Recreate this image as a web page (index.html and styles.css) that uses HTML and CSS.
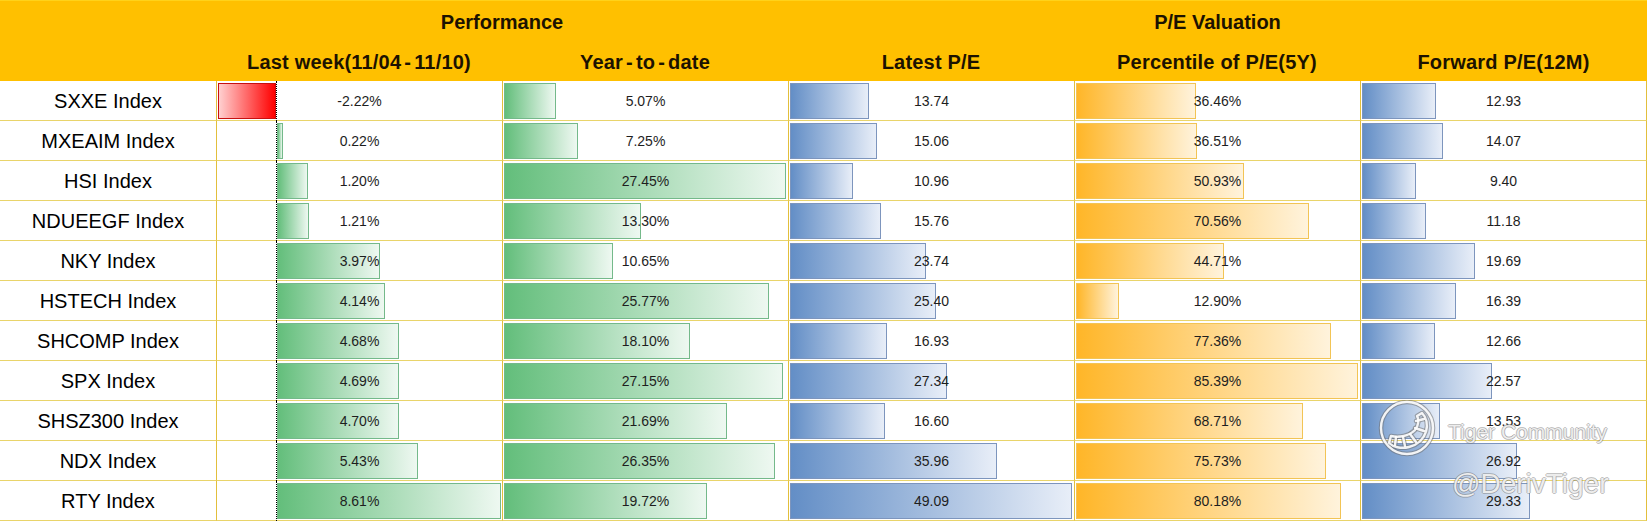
FILE: index.html
```html
<!DOCTYPE html>
<html lang="en">
<head>
<meta charset="utf-8">
<title>Index Performance &amp; P/E Valuation</title>
<link rel="stylesheet" href="styles.css">
</head>
<body>
<div class="sheet">
  <div class="head">
    <div class="h-blank"></div>
    <div class="h-group perf">Performance</div>
    <div class="h-group pe">P/E Valuation</div>
    <div class="h-col">Last week(11/04<span class="hy">-</span>11/10)</div>
    <div class="h-col">Year<span class="hy">-</span>to<span class="hy">-</span>date</div>
    <div class="h-col">Latest P/E</div>
    <div class="h-col">Percentile of P/E(5Y)</div>
    <div class="h-col">Forward P/E(12M)</div>
  </div>

  <div class="row">
    <div class="name">SXXE Index</div>
    <div class="cell lw"><span class="axis"></span><span class="bar neg" style="width:58px"></span><span class="val">-2.22%</span></div>
    <div class="cell"><span class="bar green" style="width:52px"></span><span class="val">5.07%</span></div>
    <div class="cell"><span class="bar blue" style="width:79px"></span><span class="val">13.74</span></div>
    <div class="cell"><span class="bar orange" style="width:120px"></span><span class="val">36.46%</span></div>
    <div class="cell last"><span class="bar blue" style="width:74px"></span><span class="val">12.93</span></div>
  </div>
  <div class="row">
    <div class="name">MXEAIM Index</div>
    <div class="cell lw"><span class="axis"></span><span class="bar green pos" style="width:6px"></span><span class="val">0.22%</span></div>
    <div class="cell"><span class="bar green" style="width:74px"></span><span class="val">7.25%</span></div>
    <div class="cell"><span class="bar blue" style="width:87px"></span><span class="val">15.06</span></div>
    <div class="cell"><span class="bar orange" style="width:121px"></span><span class="val">36.51%</span></div>
    <div class="cell last"><span class="bar blue" style="width:81px"></span><span class="val">14.07</span></div>
  </div>
  <div class="row">
    <div class="name">HSI Index</div>
    <div class="cell lw"><span class="axis"></span><span class="bar green pos" style="width:31px"></span><span class="val">1.20%</span></div>
    <div class="cell"><span class="bar green" style="width:282px"></span><span class="val">27.45%</span></div>
    <div class="cell"><span class="bar blue" style="width:63px"></span><span class="val">10.96</span></div>
    <div class="cell"><span class="bar orange" style="width:168px"></span><span class="val">50.93%</span></div>
    <div class="cell last"><span class="bar blue" style="width:54px"></span><span class="val">9.40</span></div>
  </div>
  <div class="row">
    <div class="name">NDUEEGF Index</div>
    <div class="cell lw"><span class="axis"></span><span class="bar green pos" style="width:32px"></span><span class="val">1.21%</span></div>
    <div class="cell"><span class="bar green" style="width:137px"></span><span class="val">13.30%</span></div>
    <div class="cell"><span class="bar blue" style="width:91px"></span><span class="val">15.76</span></div>
    <div class="cell"><span class="bar orange" style="width:233px"></span><span class="val">70.56%</span></div>
    <div class="cell last"><span class="bar blue" style="width:64px"></span><span class="val">11.18</span></div>
  </div>
  <div class="row">
    <div class="name">NKY Index</div>
    <div class="cell lw"><span class="axis"></span><span class="bar green pos" style="width:103px"></span><span class="val">3.97%</span></div>
    <div class="cell"><span class="bar green" style="width:109px"></span><span class="val">10.65%</span></div>
    <div class="cell"><span class="bar blue" style="width:136px"></span><span class="val">23.74</span></div>
    <div class="cell"><span class="bar orange" style="width:148px"></span><span class="val">44.71%</span></div>
    <div class="cell last"><span class="bar blue" style="width:113px"></span><span class="val">19.69</span></div>
  </div>
  <div class="row">
    <div class="name">HSTECH Index</div>
    <div class="cell lw"><span class="axis"></span><span class="bar green pos" style="width:108px"></span><span class="val">4.14%</span></div>
    <div class="cell"><span class="bar green" style="width:265px"></span><span class="val">25.77%</span></div>
    <div class="cell"><span class="bar blue" style="width:146px"></span><span class="val">25.40</span></div>
    <div class="cell"><span class="bar orange" style="width:43px"></span><span class="val">12.90%</span></div>
    <div class="cell last"><span class="bar blue" style="width:94px"></span><span class="val">16.39</span></div>
  </div>
  <div class="row">
    <div class="name">SHCOMP Index</div>
    <div class="cell lw"><span class="axis"></span><span class="bar green pos" style="width:122px"></span><span class="val">4.68%</span></div>
    <div class="cell"><span class="bar green" style="width:186px"></span><span class="val">18.10%</span></div>
    <div class="cell"><span class="bar blue" style="width:97px"></span><span class="val">16.93</span></div>
    <div class="cell"><span class="bar orange" style="width:255px"></span><span class="val">77.36%</span></div>
    <div class="cell last"><span class="bar blue" style="width:73px"></span><span class="val">12.66</span></div>
  </div>
  <div class="row">
    <div class="name">SPX Index</div>
    <div class="cell lw"><span class="axis"></span><span class="bar green pos" style="width:122px"></span><span class="val">4.69%</span></div>
    <div class="cell"><span class="bar green" style="width:279px"></span><span class="val">27.15%</span></div>
    <div class="cell"><span class="bar blue" style="width:157px"></span><span class="val">27.34</span></div>
    <div class="cell"><span class="bar orange" style="width:282px"></span><span class="val">85.39%</span></div>
    <div class="cell last"><span class="bar blue" style="width:130px"></span><span class="val">22.57</span></div>
  </div>
  <div class="row">
    <div class="name">SHSZ300 Index</div>
    <div class="cell lw"><span class="axis"></span><span class="bar green pos" style="width:122px"></span><span class="val">4.70%</span></div>
    <div class="cell"><span class="bar green" style="width:223px"></span><span class="val">21.69%</span></div>
    <div class="cell"><span class="bar blue" style="width:95px"></span><span class="val">16.60</span></div>
    <div class="cell"><span class="bar orange" style="width:227px"></span><span class="val">68.71%</span></div>
    <div class="cell last"><span class="bar blue" style="width:78px"></span><span class="val">13.53</span></div>
  </div>
  <div class="row">
    <div class="name">NDX Index</div>
    <div class="cell lw"><span class="axis"></span><span class="bar green pos" style="width:141px"></span><span class="val">5.43%</span></div>
    <div class="cell"><span class="bar green" style="width:271px"></span><span class="val">26.35%</span></div>
    <div class="cell"><span class="bar blue" style="width:207px"></span><span class="val">35.96</span></div>
    <div class="cell"><span class="bar orange" style="width:250px"></span><span class="val">75.73%</span></div>
    <div class="cell last"><span class="bar blue" style="width:155px"></span><span class="val">26.92</span></div>
  </div>
  <div class="row">
    <div class="name">RTY Index</div>
    <div class="cell lw"><span class="axis"></span><span class="bar green pos" style="width:224px"></span><span class="val">8.61%</span></div>
    <div class="cell"><span class="bar green" style="width:203px"></span><span class="val">19.72%</span></div>
    <div class="cell"><span class="bar blue" style="width:282px"></span><span class="val">49.09</span></div>
    <div class="cell"><span class="bar orange" style="width:265px"></span><span class="val">80.18%</span></div>
    <div class="cell last"><span class="bar blue" style="width:168px"></span><span class="val">29.33</span></div>
  </div>

  <div class="watermark">
    <svg class="wm-logo" width="60" height="60" viewBox="0 0 60 60" aria-hidden="true">
      <g fill="none" stroke="rgba(110,110,110,0.55)" stroke-width="4.6" stroke-linejoin="round" stroke-linecap="round">
        <circle cx="29" cy="28" r="26"/>
        <path d="M44 13 C53 22 50 42 31 47 C23 49 15 47 11 43 L13 36 C21 38 31 36 37 30 C41 25 41 19 39 16 Z"/>
        <path d="M38 21 L46 19 M37 28 L46 31 M32 34 L38 42 M25 37 L27 46 M18 37 L17 45"/>
      </g>
      <g fill="none" stroke="rgba(255,255,255,0.9)" stroke-width="2.4" stroke-linejoin="round" stroke-linecap="round">
        <circle cx="29" cy="28" r="26"/>
        <path d="M44 13 C53 22 50 42 31 47 C23 49 15 47 11 43 L13 36 C21 38 31 36 37 30 C41 25 41 19 39 16 Z"/>
        <path d="M38 21 L46 19 M37 28 L46 31 M32 34 L38 42 M25 37 L27 46 M18 37 L17 45"/>
      </g>
    </svg>
    <div class="wm-brand">Tiger Community</div>
    <div class="wm-user">@DerivTiger</div>
  </div>
</div>
</body>
</html>
```

FILE: styles.css
```css
html, body {
  margin: 0;
  padding: 0;
  background: #ffffff;
}

.sheet {
  position: relative;
  width: 1647px;
  font-family: "Liberation Sans", Arial, sans-serif;
  color: #000;
}

.head,
.row {
  display: grid;
  grid-template-columns: 216px 286px 286px 286px 286px 287px;
}

.head {
  grid-template-rows: 41px 40px;
  background: #ffc000;
  border-top: 1px solid #ffd21a;
  box-sizing: border-box;
  height: 81px;
  color: #1c1200;
  font-weight: bold;
  font-size: 20px;
}

.h-blank {
  grid-row: 1 / span 2;
  grid-column: 1;
}

.h-group,
.h-col {
  display: flex;
  align-items: center;
  justify-content: center;
  white-space: nowrap;
}

.perf {
  grid-row: 1;
  grid-column: 2 / span 2;
  padding-top: 1px;
}

.pe {
  grid-row: 1;
  grid-column: 4 / span 3;
  padding-top: 1px;
}

.h-col {
  grid-row: 2;
  font-size: 20px;
  letter-spacing: 0.2px;
  padding-top: 1px;
}

.hy {
  margin: 0 3px;
}

.row {
  height: 40px;
}

.name,
.cell {
  box-sizing: border-box;
  height: 40px;
  border-bottom: 1px solid #e9d46a;
}

.name {
  display: flex;
  align-items: center;
  justify-content: center;
  font-size: 20px;
  padding-top: 2px;
  color: #000;
}

.cell {
  display: grid;
  grid-template-columns: 1fr;
  grid-template-rows: 1fr;
  border-left: 1px solid #e2bf3c;
}

.cell.last {
  border-right: 1px solid #e2bf3c;
}

.cell > * {
  grid-area: 1 / 1;
}

.bar {
  box-sizing: border-box;
  justify-self: start;
  align-self: start;
  margin-top: 2px;
  margin-left: 1px;
  height: 36px;
  border: 1px solid;
}

.bar.pos {
  margin-left: 60px;
}

.axis {
  justify-self: start;
  align-self: stretch;
  margin-left: 59px;
  margin-bottom: -1px;
  width: 0;
  border-left: 1px dotted #000;
}

.green {
  background: linear-gradient(to right, #63be7b, #eef8f1);
  border-color: #74b98a;
}

.blue {
  background: linear-gradient(to right, #638ec6, #e8eef8);
  border-color: #7d95bd;
}

.orange {
  background: linear-gradient(to right, #ffb628, #fff3dc);
  border-color: #f2c455;
}

.neg {
  background: linear-gradient(to right, #ffd0d0, #ff0000);
  border-color: #c81010;
}

.val {
  place-self: center;
  font-size: 14px;
  color: #1e1e1e;
  padding-top: 1px;
}

.watermark {
  position: absolute;
  left: 1378px;
  top: 399px;
  width: 260px;
  height: 110px;
  pointer-events: none;
}

.wm-logo {
  position: absolute;
  left: 0;
  top: 1px;
}

.wm-brand,
.wm-user {
  position: absolute;
  white-space: nowrap;
  color: rgba(255, 255, 255, 0.85);
  text-shadow:
    1px 0 0 rgba(120, 120, 120, 0.45),
    -1px 0 0 rgba(120, 120, 120, 0.45),
    0 1px 0 rgba(120, 120, 120, 0.45),
    0 -1px 0 rgba(120, 120, 120, 0.45);
}

.wm-brand {
  left: 70px;
  top: 21px;
  font-size: 21px;
  line-height: 24px;
}

.wm-user {
  left: 74px;
  top: 69px;
  font-size: 28px;
  line-height: 32px;
}
```
